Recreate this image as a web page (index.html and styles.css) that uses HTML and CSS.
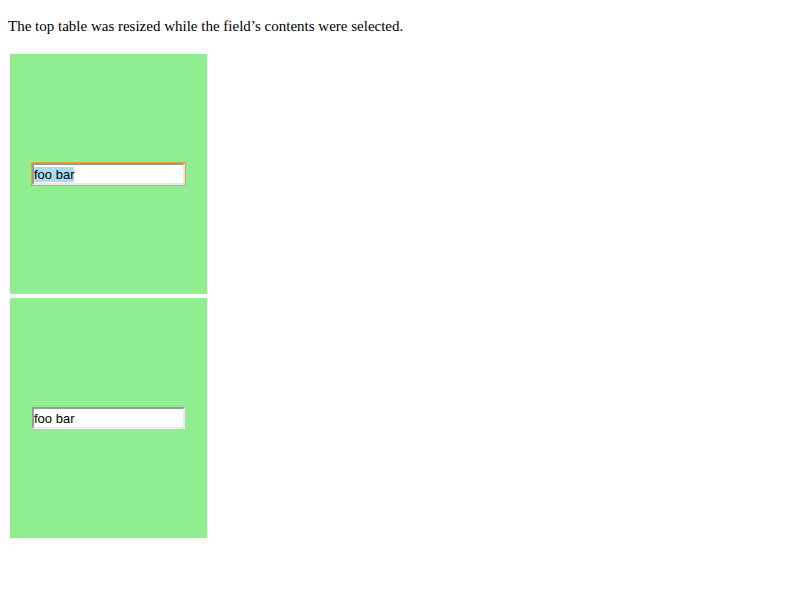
FILE: index.html
```html
<!DOCTYPE html>
<html>
<head>
<meta charset="utf-8">
<link rel="stylesheet" href="styles.css">
</head>
<body>
<p class="note">The top table was resized while the field’s contents were selected.</p>
<table class="box">
  <tr><td class="cell"><span class="field focused"><span class="sel">foo bar</span></span></td></tr>
</table>
<table class="box">
  <tr><td class="cell"><span class="field">foo bar</span></td></tr>
</table>
</body>
</html>
```
FILE: styles.css
```css
html, body {
  background: #ffffff;
}
body {
  margin: 0;
  padding: 8px;
  font-family: "Liberation Serif", "Times New Roman", serif;
  font-size: 15px;
  color: #000;
}
.note {
  margin: 8px 0 16px;
  line-height: 20px;
}
.box {
  border-collapse: separate;
  border-spacing: 2px;
}
.cell {
  width: 197px;
  height: 240px;
  padding: 0;
  background: #90ee90;
  text-align: center;
  vertical-align: middle;
}
.field {
  display: inline-flex;
  align-items: center;
  box-sizing: border-box;
  width: 153px;
  height: 22px;
  padding: 0;
  background: #fff;
  border-style: solid;
  border-width: 2px;
  border-color: #9a9a9a #ececec #ececec #9a9a9a;
  font-family: "Liberation Sans", Arial, sans-serif;
  font-size: 13px;
  line-height: 15px;
  text-align: left;
  vertical-align: middle;
  color: #000;
}
.field.focused {
  outline: 1px solid #e2a83e;
  outline-offset: 0;
  border-color: #9a9a9a #e8e8e8 #e8e8e8 #9a9a9a;
}
.sel {
  background: #acdcf2;
}
```
